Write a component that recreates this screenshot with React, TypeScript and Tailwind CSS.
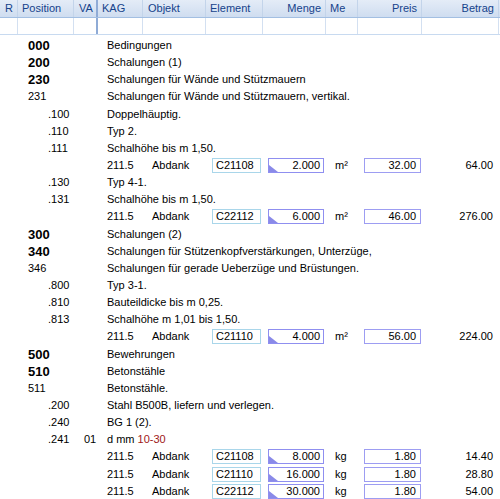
import type { ReactNode } from 'react'

type Item = { el: string; menge: string; me: string; preis: string; betrag: string }
type Row =
  | { kind: 'pos'; pos: string; lvl: 'b' | 'n' | 'd'; va?: string; text: ReactNode }
  | { kind: 'item'; item: Item }

const item = (el: string, menge: string, me: string, preis: string, betrag: string): Row => ({
  kind: 'item',
  item: { el, menge, me, preis, betrag },
})

const rows: Row[] = [
  { kind: 'pos', pos: '000', lvl: 'b', text: 'Bedingungen' },
  { kind: 'pos', pos: '200', lvl: 'b', text: 'Schalungen (1)' },
  { kind: 'pos', pos: '230', lvl: 'b', text: 'Schalungen für Wände und Stützmauern' },
  { kind: 'pos', pos: '231', lvl: 'n', text: 'Schalungen für Wände und Stützmauern, vertikal.' },
  { kind: 'pos', pos: '.100', lvl: 'd', text: 'Doppelhäuptig.' },
  { kind: 'pos', pos: '.110', lvl: 'd', text: 'Typ 2.' },
  { kind: 'pos', pos: '.111', lvl: 'd', text: 'Schalhöhe bis m 1,50.' },
  item('C21108', '2.000', 'm²', '32.00', '64.00'),
  { kind: 'pos', pos: '.130', lvl: 'd', text: 'Typ 4-1.' },
  { kind: 'pos', pos: '.131', lvl: 'd', text: 'Schalhöhe bis m 1,50.' },
  item('C22112', '6.000', 'm²', '46.00', '276.00'),
  { kind: 'pos', pos: '300', lvl: 'b', text: 'Schalungen (2)' },
  { kind: 'pos', pos: '340', lvl: 'b', text: 'Schalungen für Stützenkopfverstärkungen, Unterzüge,' },
  { kind: 'pos', pos: '346', lvl: 'n', text: 'Schalungen für gerade Ueberzüge und Brüstungen.' },
  { kind: 'pos', pos: '.800', lvl: 'd', text: 'Typ 3-1.' },
  { kind: 'pos', pos: '.810', lvl: 'd', text: 'Bauteildicke bis m 0,25.' },
  { kind: 'pos', pos: '.813', lvl: 'd', text: 'Schalhöhe m 1,01 bis 1,50.' },
  item('C21110', '4.000', 'm²', '56.00', '224.00'),
  { kind: 'pos', pos: '500', lvl: 'b', text: 'Bewehrungen' },
  { kind: 'pos', pos: '510', lvl: 'b', text: 'Betonstähle' },
  { kind: 'pos', pos: '511', lvl: 'n', text: 'Betonstähle.' },
  { kind: 'pos', pos: '.200', lvl: 'd', text: 'Stahl B500B, liefern und verlegen.' },
  { kind: 'pos', pos: '.240', lvl: 'd', text: 'BG 1 (2).' },
  {
    kind: 'pos',
    pos: '.241',
    lvl: 'd',
    va: '01',
    text: (
      <>
        d mm <span className="text-[#a01818]">10-30</span>
      </>
    ),
  },
  item('C21108', '8.000', 'kg', '1.80', '14.40'),
  item('C21110', '16.000', 'kg', '1.80', '28.80'),
  item('C22112', '30.000', 'kg', '1.80', '54.00'),
]

const cols = 'grid grid-cols-[18px_56px_24px_45px_63px_57px_63px_32px_64px_77px]'

function HeaderRow() {
  const cell = 'h-[17px] flex items-center border-r border-[#c3d4ea] text-[#15428b] whitespace-nowrap'
  return (
    <div className={`${cols} bg-gradient-to-b from-[#e4ecf7] to-[#cfddf0] border-b border-[#a3bfe2]`}>
      <div className={`${cell} pl-[5px]`}>R</div>
      <div className={`${cell} pl-[4px]`}>Position</div>
      <div className={`${cell} pl-[5px] border-r-2 border-r-[#8fabd6]`}>VA</div>
      <div className={`${cell} pl-[4px]`}>KAG</div>
      <div className={`${cell} pl-[5px]`}>Objekt</div>
      <div className={`${cell} pl-[4px]`}>Element</div>
      <div className={`${cell} justify-end pr-[4px]`}>Menge</div>
      <div className={`${cell} pl-[4px]`}>Me</div>
      <div className={`${cell} justify-end pr-[4px]`}>Preis</div>
      <div className={`${cell} justify-end pr-[4px]`}>Betrag</div>
    </div>
  )
}

function FilterRow() {
  const cell = 'h-[16px] border-r border-[#d3e0f1]'
  return (
    <div className={`${cols} bg-white border-b border-[#c8daf0]`}>
      {Array.from({ length: 10 }).map((_, i) => (
        <div key={i} className={i === 2 ? `${cell} border-r-2 border-r-[#8fabd6]` : cell} />
      ))}
    </div>
  )
}

function QtyBox({ value }: { value: string }) {
  return (
    <div className="relative h-[15px] w-[56px] border border-[#8f8ff0] bg-white flex items-center justify-end pr-[3px]">
      <svg className="absolute left-0 bottom-0" width="9" height="7" viewBox="0 0 9 7">
        <polygon points="0,0 0,7 9,7" fill="#8a8ae8" />
      </svg>
      {value}
    </div>
  )
}

function ItemRow({ it }: { it: Item }) {
  return (
    <div className={`${cols} h-[17.15px] items-center`}>
      <div />
      <div />
      <div />
      <div className="pl-[9px]">211.5</div>
      <div className="pl-[9px]">Abdank</div>
      <div className="pl-[6px]">
        <div className="h-[15px] w-[49px] border border-[#a9d6ea] bg-white flex items-center pl-[3px]">{it.el}</div>
      </div>
      <div className="pl-[5px]">
        <QtyBox value={it.menge} />
      </div>
      <div className="pl-[9px]">{it.me}</div>
      <div className="pl-[6px]">
        <div className="h-[15px] w-[57px] border border-[#9d9df2] bg-white flex items-center justify-end pr-[4px]">
          {it.preis}
        </div>
      </div>
      <div className="text-right pr-[6px]">{it.betrag}</div>
    </div>
  )
}

function PosRow({ r }: { r: Extract<Row, { kind: 'pos' }> }) {
  const posCls =
    r.lvl === 'b'
      ? 'pl-[10px] font-bold text-[13px]'
      : r.lvl === 'n'
        ? 'pl-[10px]'
        : 'pl-[30px]'
  return (
    <div className={`${cols} h-[17.15px] items-center`}>
      <div />
      <div className={`${posCls} whitespace-nowrap`}>{r.pos}</div>
      <div className="pl-[10px]">{r.va}</div>
      <div className="col-span-7 pl-[9px] whitespace-nowrap">{r.text}</div>
    </div>
  )
}

export default function App() {
  return (
    <div
      className="w-[500px] h-[499px] overflow-hidden bg-white text-[11px] text-black leading-none"
      style={{ fontFamily: '"Liberation Sans", Arial, sans-serif' }}
    >
      <HeaderRow />
      <FilterRow />
      <div className="pt-[2px]">
        {rows.map((r, i) =>
          r.kind === 'item' ? <ItemRow key={i} it={r.item} /> : <PosRow key={i} r={r} />,
        )}
      </div>
    </div>
  )
}
